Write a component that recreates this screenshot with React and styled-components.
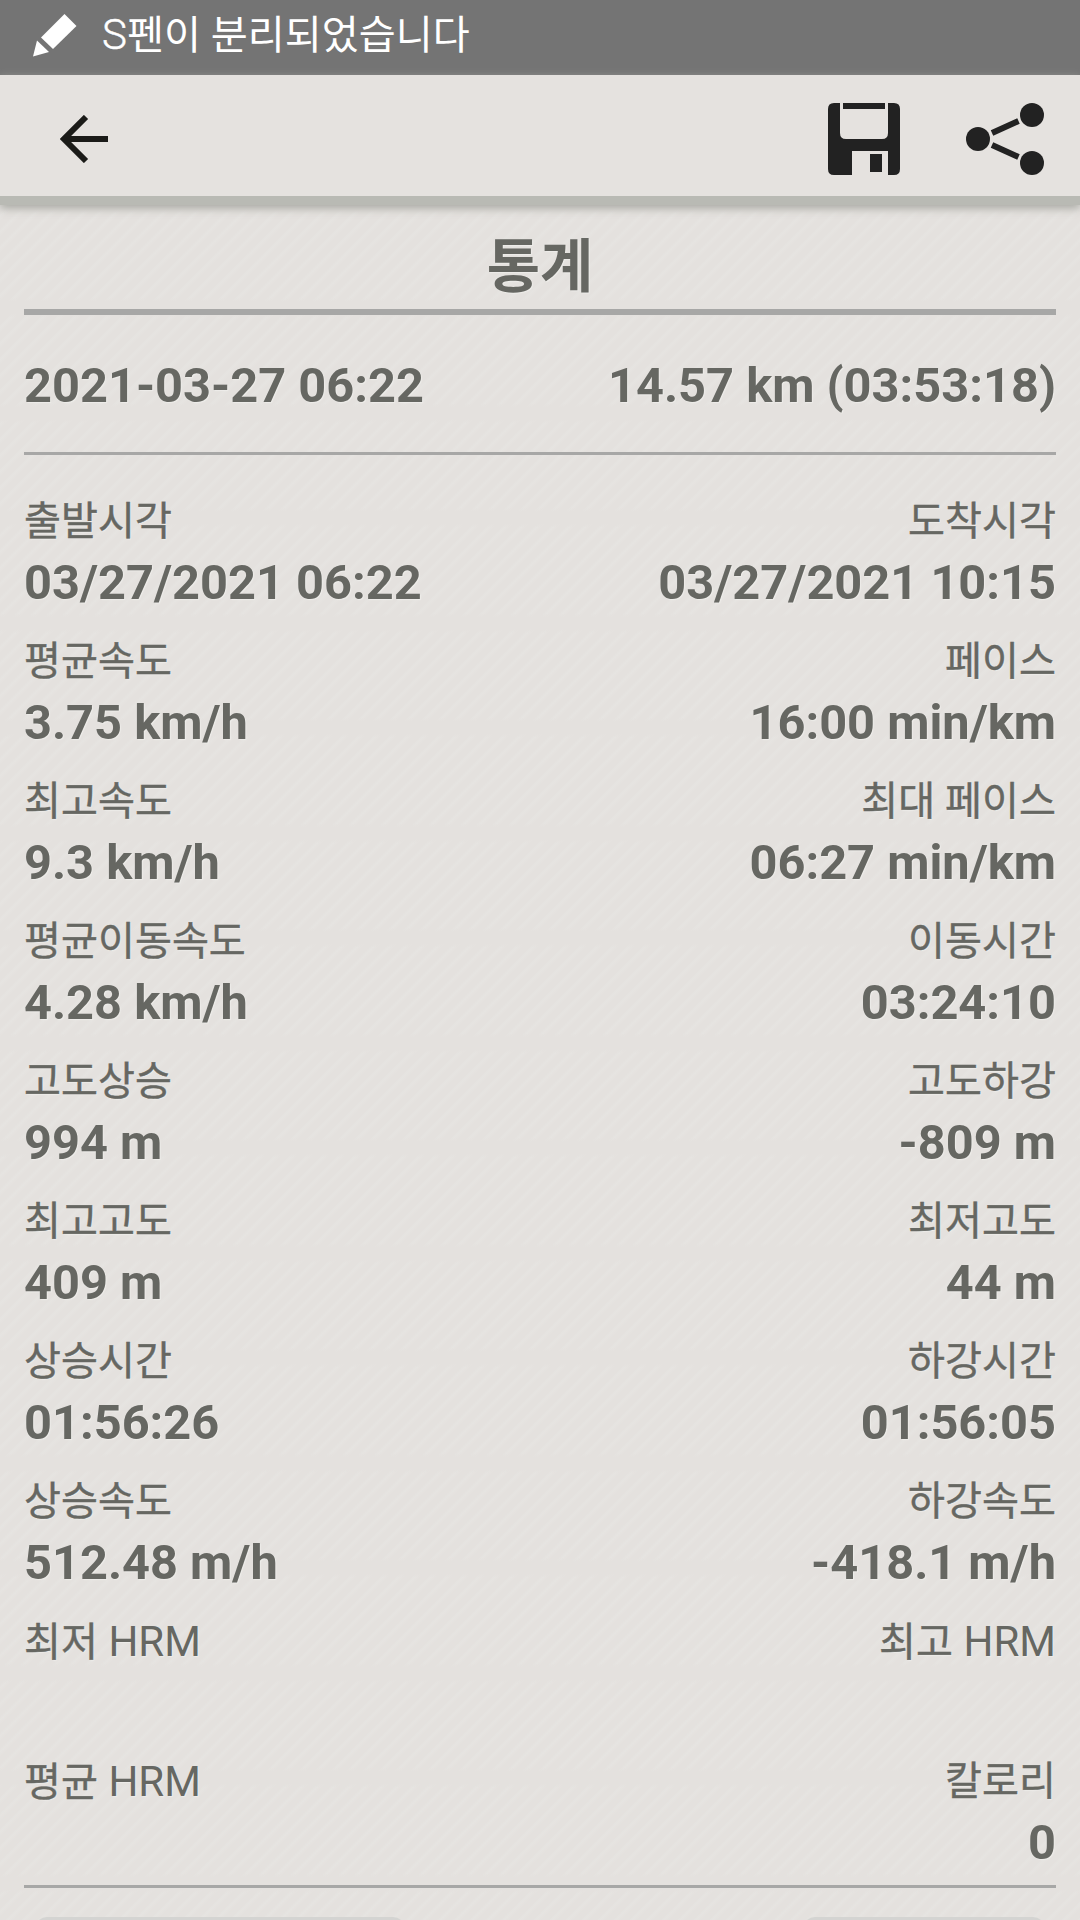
import styled, { createGlobalStyle } from 'styled-components';

const stats = [
  [['출발시각', '03/27/2021 06:22'], ['도착시각', '03/27/2021 10:15']],
  [['평균속도', '3.75 km/h'], ['페이스', '16:00 min/km']],
  [['최고속도', '9.3 km/h'], ['최대 페이스', '06:27 min/km']],
  [['평균이동속도', '4.28 km/h'], ['이동시간', '03:24:10']],
  [['고도상승', '994 m'], ['고도하강', '-809 m']],
  [['최고고도', '409 m'], ['최저고도', '44 m']],
  [['상승시간', '01:56:26'], ['하강시간', '01:56:05']],
  [['상승속도', '512.48 m/h'], ['하강속도', '-418.1 m/h']],
  [['최저', '', 'HRM'], ['최고', '', 'HRM']],
  [['평균', '', 'HRM'], ['칼로리', '0']],
];

function Stat({ data: [label, value, suffix], right }) {
  return (
    <Cell $right={right}>
      <Label>
        {label}
        {suffix && <Latin> {suffix}</Latin>}
      </Label>
      <Value>{value}</Value>
    </Cell>
  );
}

function App() {
  return (
    <Screen>
      <GlobalStyle />
      <StatusBar>
        <svg width="44" height="44" viewBox="0 0 44 44" fill="#fff">
          <path d="M31.5 0 L43.5 12 L20 35 L8 23.5 Z" />
          <path d="M4 26.5 L16 38 L0 42.5 Z" />
        </svg>
        <Notice>
          <NoticeInitial>S</NoticeInitial>펜이 분리되었습니다
        </Notice>
      </StatusBar>

      <Toolbar>
        <IconButton aria-label="뒤로">
          <svg width="48" height="48" viewBox="0 0 48 48" fill="none" stroke="#1b1b18" strokeWidth="6">
            <path d="M26 2 L4 24 L26 46 M4 24 H48" />
          </svg>
        </IconButton>
        <Actions>
          <IconButton aria-label="저장">
            <svg width="72" height="72" viewBox="0 0 72 72" fill="#222">
              <path d="M6 0 H12 V30 Q12 36 18 36 H54 Q60 36 60 30 V0 H66 Q72 0 72 6 V66 Q72 72 66 72 H60 V48 H24 V72 H6 Q0 72 0 66 V6 Q0 0 6 0 Z" />
              <path d="M15 0 H57 V6 H15 Z M42 51 H54 V69 H42 Z" />
            </svg>
          </IconButton>
          <IconButton aria-label="공유">
            <svg width="78" height="72" viewBox="0 0 78 72" fill="#222">
              <circle cx="12" cy="36" r="12" />
              <circle cx="66" cy="12" r="12" />
              <circle cx="66" cy="60" r="12" />
              <path d="M26 30 L52.5 18 M26 42 L52.5 54" stroke="#222" strokeWidth="6" />
            </svg>
          </IconButton>
        </Actions>
      </Toolbar>

      <Content>
        <Title>통계</Title>
        <Summary>
          <Value>2021-03-27 06:22</Value>
          <Value>14.57 km (03:53:18)</Value>
        </Summary>
        <Stats>
          {stats.map(([left, right]) => (
            <Row key={left[0] + right[0]}>
              <Stat data={left} />
              <Stat data={right} right />
            </Row>
          ))}
        </Stats>
        <Buttons>
          <Button $width={370} />
          <Button $width={242} />
        </Buttons>
      </Content>
    </Screen>
  );
}

export default App;

const GlobalStyle = createGlobalStyle`
  * {
    box-sizing: border-box;
  }
  body {
    margin: 0;
    background: #e4e1de;
  }
`;

const Screen = styled.div`
  display: flex;
  flex-direction: column;
  width: 1080px;
  height: 1920px;
  overflow: hidden;
  color: #666762;
  font-family: Roboto, 'Noto Sans CJK KR', sans-serif;
`;

const StatusBar = styled.div`
  display: flex;
  align-items: center;
  flex: none;
  height: 75px;
  padding: 0 33px 4px;
  gap: 25px;
  background: #747474;
  color: #fff;
`;

const Notice = styled.div`
  margin-top: -1px;
  font-size: 40.2px;
  line-height: 60px;
  font-weight: 400;
`;

const NoticeInitial = styled.span`
  font-size: 42px;
  font-weight: 300;
  -webkit-text-stroke: 0.4px #fff;
`;

const Toolbar = styled.header`
  position: relative;
  z-index: 1;
  display: flex;
  align-items: center;
  justify-content: space-between;
  flex: none;
  height: 130px;
  padding: 7px 36px 0 60px;
  border-bottom: 9px solid #b9bab4;
  background: #e5e2df;
  box-shadow: 0 3px 9px #a5a6a0;
`;

const Actions = styled.div`
  display: flex;
  gap: 66px;
`;

const IconButton = styled.button`
  display: flex;
  padding: 0;
  border: 0;
  background: none;
`;

/* Diagonal stripes, broken by a plain band at the end of every 105px tile */
const Content = styled.main`
  display: flex;
  flex-direction: column;
  flex: 1;
  padding: 0 24px;
  background:
    repeating-linear-gradient(to bottom, #e4e1de 0 4px, transparent 8px 93px, #e4e1de 97px 105px),
    repeating-linear-gradient(135deg, #e4e1de 0 5px, #e6e4e1 8px, #e4e1de 11.314px);
`;

const Title = styled.h1`
  flex: none;
  height: 110px;
  margin: 0;
  padding-top: 19px;
  border-bottom: 6px solid #a7a7a6;
  font-size: 58px;
  font-weight: 700;
  line-height: 86px;
  text-align: center;
  text-shadow: 1px 1px 1px #eeedea;
`;

const Summary = styled.div`
  display: flex;
  align-items: center;
  justify-content: space-between;
  flex: none;
  height: 140px;
  padding-top: 4px;
  border-bottom: 3px solid #a7a7a6;
`;

const Stats = styled.div`
  flex: none;
  height: 1433px;
  padding-top: 37px;
  border-bottom: 3px solid #a7a7a6;
`;

const Row = styled.div`
  display: flex;
  justify-content: space-between;
  height: 140px;
`;

const Cell = styled.div`
  display: flex;
  flex-direction: column;
  align-items: ${({ $right }) => ($right ? 'flex-end' : 'flex-start')};
`;

const Label = styled.div`
  height: 59px;
  font-size: 40.2px;
  line-height: 60px;
  white-space: pre;
  text-shadow: 1px 1px 1px #eeedea;
  -webkit-text-stroke: 0.4px #666762;
`;

const Latin = styled.span`
  font-size: 42px;
  -webkit-text-stroke: 0;
`;

const Value = styled.div`
  font-size: 48.75px;
  font-weight: 700;
  line-height: 64px;
  white-space: pre;
  text-shadow: 1px 1px 1px #eeedea;
`;

const Buttons = styled.div`
  display: flex;
  justify-content: space-between;
  padding: 29px 11px 0;
`;

const Button = styled.div`
  width: ${({ $width }) => $width}px;
  height: 120px;
  border-radius: 12px;
  background: #d4d4d2;
`;
